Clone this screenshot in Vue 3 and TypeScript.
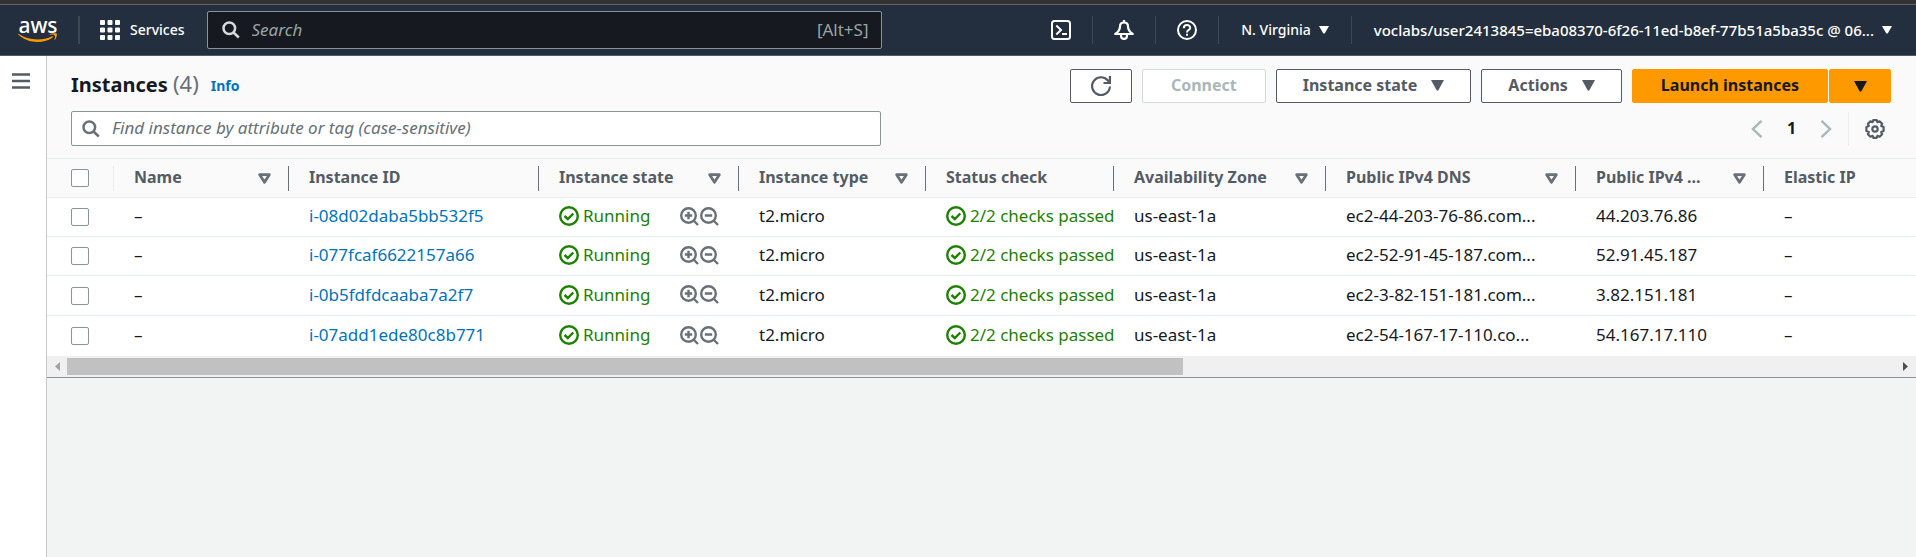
<script setup lang="ts">
import { ref } from 'vue'

interface Column {
  label: string
  width?: number
  sortable: boolean
}

interface Instance {
  id: string
  dns: string
  ip: string
  selected: boolean
}

const columns: Column[] = [
  { label: 'Name', width: 175, sortable: true },
  { label: 'Instance ID', width: 250, sortable: false },
  { label: 'Instance state', width: 200, sortable: true },
  { label: 'Instance type', width: 187, sortable: true },
  { label: 'Status check', width: 188, sortable: false },
  { label: 'Availability Zone', width: 212, sortable: true },
  { label: 'Public IPv4 DNS', width: 250, sortable: true },
  { label: 'Public IPv4 ...', width: 188, sortable: true },
  { label: 'Elastic IP', sortable: false },
]

const instances = ref<Instance[]>([
  { id: 'i-08d02daba5bb532f5', dns: 'ec2-44-203-76-86.com...', ip: '44.203.76.86', selected: false },
  { id: 'i-077fcaf6622157a66', dns: 'ec2-52-91-45-187.com...', ip: '52.91.45.187', selected: false },
  { id: 'i-0b5fdfdcaaba7a2f7', dns: 'ec2-3-82-151-181.com...', ip: '3.82.151.181', selected: false },
  { id: 'i-07add1ede80c8b771', dns: 'ec2-54-167-17-110.co...', ip: '54.167.17.110', selected: false },
])

const search = ref('')
const filter = ref('')
const allSelected = ref(false)

function toggleAll() {
  instances.value.forEach((row) => (row.selected = allSelected.value))
}
</script>

<template>
  <div class="console">
    <div class="browser-edge"></div>
    <header class="topnav">
      <a class="logo" href="#" aria-label="AWS home">
        <span class="logo-text">aws</span>
        <svg class="smile" viewBox="0 0 40 10" width="40" height="10">
          <path d="M.4.8C6 4.600 12 6.500 19.500 6.500c5.500 0 10-1.200 14.500-3.300.8-.3 1.400.5.700 1.100C30.800 7.600 25.300 9 19.500 9 12 9 5.500 6.300.2 1.500-.1 1 .1.600.4.8z" fill="#f90" />
          <path d="M36.200 2.100c-.7-.8-3-.6-4.400-.3-.4.100-.5-.3-.1-.6C33.400.1 38 0 38.700.5c.6.600-.1 4.800-1.900 6.500-.3.300-.6.100-.4-.2.500-1.200 1.200-3.800-.2-4.700z" fill="#f90" />
        </svg>
      </a>
      <span class="nav-line bold-line"></span>
      <button class="services" type="button">
        <svg viewBox="0 0 20 20" width="20" height="20" fill="#fff">
          <template v-for="r in 3" :key="r">
            <rect v-for="c in 3" :key="c" :x="(c - 1) * 7.500" :y="(r - 1) * 7.500" width="5" height="5" rx="1" />
          </template>
        </svg>
        Services
      </button>
      <label class="nav-search">
        <svg viewBox="0 0 18 18" width="18" height="18" fill="none" stroke="#d5dbdb" stroke-width="2.500">
          <circle cx="7.300" cy="7.300" r="5.800" /><path d="M11.500 11.500l5.300 5" />
        </svg>
        <input v-model="search" type="text" placeholder="Search" aria-label="Search" />
        <span>[Alt+S]</span>
      </label>
      <div class="nav-right">
        <button class="nav-icon" type="button" aria-label="CloudShell">
          <svg viewBox="0 0 20 20" width="20" height="20" fill="none" stroke="#fff" stroke-width="2">
            <rect x="1" y="1" width="18" height="18" rx="2.500" /><path d="M5.300 5.500l4.700 4.500-4.700 4.500M11 14h5" />
          </svg>
        </button>
        <span class="nav-line"></span>
        <button class="nav-icon" type="button" aria-label="Notifications">
          <svg viewBox="0 0 20 20" width="20" height="20" fill="none" stroke="#fff" stroke-width="2.200" stroke-linejoin="round">
            <path d="M10 0v3M10 2.500C7.500 2.500 6 4 6 6.500 6 10 4 12.200 1.200 14h17.600C16 12.200 14 10 14 6.500 14 4 12.500 2.500 10 2.500z" />
            <path d="M7 14v1.500c0 4.600 6 4.600 6 0V14" />
          </svg>
        </button>
        <span class="nav-line"></span>
        <button class="nav-icon" type="button" aria-label="Help">
          <svg viewBox="0 0 20 20" width="20" height="20" fill="none" stroke="#fff" stroke-width="2">
            <circle cx="10" cy="10" r="9" /><path d="M6.800 8.200C6.800 3.900 13.200 4 13.200 7.900 13.200 10.200 10 9.700 10 12.500M10 13.700v2.100" />
          </svg>
        </button>
        <span class="nav-line"></span>
        <button class="nav-menu" type="button">
          N. Virginia
          <svg viewBox="0 0 10 8" width="10" height="8"><path d="M0 0h10L6 7q-1 1.200-2 0z" fill="#fff" /></svg>
        </button>
        <span class="nav-line"></span>
        <button class="nav-menu account" type="button">
          voclabs/user2413845=eba08370-6f26-11ed-b8ef-77b51a5ba35c @ 06...
          <svg viewBox="0 0 10 8" width="10" height="8"><path d="M0 0h10L6 7q-1 1.200-2 0z" fill="#fff" /></svg>
        </button>
      </div>
    </header>

    <div class="body">
      <aside class="side">
        <button type="button" aria-label="Open navigation">
          <svg viewBox="0 0 18 16" width="18" height="16" stroke="#545b64" stroke-width="2.400"><path d="M0 1.500h18M0 8h18M0 14.500h18" /></svg>
        </button>
      </aside>

      <main class="content">
        <section class="panel">
          <div class="panel-head">
            <div class="title-row">
              <h1>Instances <span>(4)</span></h1>
              <a href="#" class="info">Info</a>
              <div class="actions">
                <button class="btn icon-btn" type="button" aria-label="Refresh">
                  <svg viewBox="0 0 20 20" width="20" height="20" fill="none" stroke="#545b64" stroke-width="2.200">
                    <path d="M18.900 10.500A8.900 8.900 0 1 1 16.600 4.200l1.700 2M18.900 0v7h-6.400" />
                  </svg>
                </button>
                <button class="btn text-btn" type="button" disabled>Connect</button>
                <button class="btn" type="button">
                  Instance state
                  <svg viewBox="0 0 13 11" width="13" height="11"><path d="M0 0h13L7.500 10q-1 1.300-2 0z" fill="#545b64" /></svg>
                </button>
                <button class="btn" type="button">
                  Actions
                  <svg viewBox="0 0 13 11" width="13" height="11"><path d="M0 0h13L7.500 10q-1 1.300-2 0z" fill="#545b64" /></svg>
                </button>
                <div class="split">
                  <button class="btn text-btn primary" type="button">Launch instances</button>
                  <button class="btn primary icon-btn" type="button" aria-label="More launch options">
                    <svg viewBox="0 0 13 11" width="13" height="11"><path d="M0 0h13L7.500 10q-1 1.300-2 0z" fill="#16191f" /></svg>
                  </button>
                </div>
              </div>
            </div>
            <div class="filter-row">
              <label class="filter">
                <svg viewBox="0 0 18 18" width="18" height="18" fill="none" stroke="#687078" stroke-width="2.500">
                  <circle cx="7.300" cy="7.300" r="5.800" /><path d="M11.500 11.500l5.300 5" />
                </svg>
                <input v-model="filter" type="text" placeholder="Find instance by attribute or tag (case-sensitive)" aria-label="Find instance" />
              </label>
              <nav class="pager" aria-label="Pages">
                <button type="button" aria-label="Previous page">
                  <svg viewBox="0 0 12 18" width="12" height="18" fill="none" stroke="#aab7b8" stroke-width="2.400"><path d="M10.500.8L2 9l8.500 8.200" /></svg>
                </button>
                <button class="page" type="button">1</button>
                <button type="button" aria-label="Next page">
                  <svg viewBox="0 0 12 18" width="12" height="18" fill="none" stroke="#aab7b8" stroke-width="2.400"><path d="M1.500.8L10 9l-8.500 8.200" /></svg>
                </button>
                <span class="pager-line"></span>
                <button type="button" aria-label="Preferences">
                  <svg viewBox="0 0 20 20" width="20" height="20" fill="none" stroke="#545b64" stroke-width="2.200" stroke-linejoin="round">
                    <path d="M8.200 1.200h3.600l.6 2 2.200-.9 2.500 2.500-.9 2.200 2.400 1v4l-2.400 1 .9 2.200-2.500 2.500-2.200-.9-.6 2H8.200l-.6-2-2.200.9-2.500-2.500.9-2.200-2.400-1V8l2.400-1-.9-2.200 2.500-2.500 2.200.9z" />
                    <circle cx="10" cy="10" r="2.700" />
                  </svg>
                </button>
              </nav>
            </div>
          </div>

          <div class="table-wrap">
            <table>
              <colgroup>
                <col class="col-check" />
                <col v-for="c in columns" :key="c.label" :style="c.width ? { width: c.width + 'px' } : {}" />
              </colgroup>
              <thead>
                <tr>
                  <th class="check"><input v-model="allSelected" type="checkbox" aria-label="Select all" @change="toggleAll" /></th>
                  <th v-for="c in columns" :key="c.label" scope="col">
                    <div class="th-inner">
                      <span>{{ c.label }}</span>
                      <svg v-if="c.sortable" viewBox="0 0 13 11" width="13" height="11" fill="none" stroke="#687078" stroke-width="2.800" stroke-linejoin="round">
                        <path d="M1.700 1.700h9.600L6.500 9.200z" />
                      </svg>
                    </div>
                  </th>
                </tr>
              </thead>
              <tbody>
                <tr v-for="row in instances" :key="row.id">
                  <td class="check"><input v-model="row.selected" type="checkbox" :aria-label="'Select ' + row.id" /></td>
                  <td>–</td>
                  <td><a href="#">{{ row.id }}</a></td>
                  <td>
                    <div class="state">
                      <span class="ok">
                        <svg viewBox="0 0 20 20" width="20" height="20" fill="none" stroke="#1d8102" stroke-width="2.400">
                          <circle cx="10" cy="10" r="8.800" /><path d="M5.500 10l3.300 3 5.500-5.500" />
                        </svg>
                        Running
                      </span>
                      <span class="lenses">
                        <button type="button" aria-label="Include filter">
                          <svg viewBox="0 0 19 19" width="19" height="19" fill="none" stroke="#687078" stroke-width="2.400">
                            <circle cx="8.500" cy="8.500" r="7.300" /><path d="M13.500 13.500l4.500 4.500M4.800 8.500h7.400M8.500 4.800v7.400" />
                          </svg>
                        </button>
                        <button type="button" aria-label="Exclude filter">
                          <svg viewBox="0 0 19 19" width="19" height="19" fill="none" stroke="#687078" stroke-width="2.400">
                            <circle cx="8.500" cy="8.500" r="7.300" /><path d="M13.500 13.500l4.500 4.500M4.800 8.500h7.400" />
                          </svg>
                        </button>
                      </span>
                    </div>
                  </td>
                  <td>t2.micro</td>
                  <td>
                    <span class="ok">
                      <svg viewBox="0 0 20 20" width="20" height="20" fill="none" stroke="#1d8102" stroke-width="2.400">
                        <circle cx="10" cy="10" r="8.800" /><path d="M5.500 10l3.300 3 5.500-5.500" />
                      </svg>
                      2/2 checks passed
                    </span>
                  </td>
                  <td>us-east-1a</td>
                  <td>{{ row.dns }}</td>
                  <td>{{ row.ip }}</td>
                  <td>–</td>
                </tr>
              </tbody>
            </table>
          </div>

          <div class="scrollbar">
            <svg viewBox="0 0 5 9" width="5" height="9"><path d="M5 0v9L0 4.500z" fill="#a3a3a3" /></svg>
            <div class="track"><div class="thumb"></div></div>
            <svg viewBox="0 0 5 9" width="5" height="9"><path d="M0 0v9l5-4.500z" fill="#505050" /></svg>
          </div>
        </section>
      </main>
    </div>
  </div>
</template>

<style>
body {
  background: #f2f3f3;
}
</style>

<style scoped>
.console {
  min-height: 100vh;
  display: flex;
  flex-direction: column;
  font-family: "Noto Sans", "Open Sans", sans-serif;
  font-size: 16px;
  line-height: 24px;
  color: #16191f;
}
.console *,
.console {
  box-sizing: border-box;
}
button,
input {
  font: inherit;
  color: inherit;
}
button {
  background: none;
  border: 0;
  padding: 0;
  display: flex;
  align-items: center;
  justify-content: center;
  white-space: nowrap;
}
svg {
  display: block;
  flex: none;
}
a {
  color: #0073bb;
  text-decoration: none;
}
.browser-edge {
  height: 5px;
  background: #333;
  border-bottom: 1px solid #666;
}
.topnav {
  height: 51px;
  display: flex;
  align-items: center;
  padding: 0 24px 0 18px;
  background: #232f3e;
  border-bottom: 1px solid #545b64;
  color: #fff;
  font-size: 14px;
  font-weight: 500;
}
.logo {
  width: 40px;
  color: #fff;
}
.logo-text {
  display: block;
  font-size: 21px;
  line-height: 16px;
  text-align: center;
}
.nav-line {
  width: 1px;
  height: 28px;
  background: #414750;
}
.bold-line {
  width: 2px;
  margin: 0 20px;
}
.services {
  gap: 10px;
}
.nav-search {
  flex: 0 1 675px;
  height: 38px;
  margin-left: 22px;
  padding: 0 12px 0 14px;
  display: flex;
  align-items: center;
  gap: 12px;
  background: #16191f;
  border: 1px solid #879596;
  border-radius: 2px;
  color: #95a5a6;
  font-size: 17px;
  font-weight: 400;
}
.nav-search input,
.filter input {
  flex: 1;
  min-width: 0;
  padding: 0;
  border: 0;
  outline: 0;
  background: none;
}
.nav-search input::placeholder {
  color: #95a5a6;
  font-style: italic;
}
.nav-right {
  margin-left: auto;
  display: flex;
  align-items: center;
}
.nav-icon {
  width: 62px;
}
.nav-menu {
  padding: 0 22px;
  gap: 8px;
}
.account {
  padding-right: 0;
  font-size: 15px;
}
.body {
  flex: 1;
  display: flex;
}
.side {
  width: 47px;
  flex: none;
  padding: 17px 0 0 12px;
  background: #fff;
  border-right: 1px solid #c4cccc;
}
.content {
  flex: 1;
  min-width: 0;
}
.panel {
  background: #fff;
  border-bottom: 1px solid #879596;
}
.panel-head {
  padding: 13px 25px 12px 24px;
  background: #fafafa;
  border-bottom: 1px solid #eaeded;
}
.title-row {
  display: flex;
  align-items: center;
  height: 34px;
}
h1 {
  margin: 0;
  font-size: 20px;
  line-height: 30px;
  font-weight: 700;
  padding-bottom: 4px;
}
h1 span {
  font-size: 22px;
  font-weight: 400;
  color: #687078;
}
.info {
  margin-left: 12px;
  font-size: 14px;
  font-weight: 700;
}
.actions {
  margin-left: auto;
  display: flex;
  gap: 10px;
}
.btn {
  height: 34px;
  padding: 0 26px 2px;
  gap: 14px;
  background: #fff;
  border: 1px solid #545b64;
  border-radius: 2px;
  color: #545b64;
  font-weight: 700;
}
.btn:disabled {
  color: #aab7b8;
  border-color: #d5dbdb;
}
.text-btn {
  padding: 0 28px 2px;
}
.icon-btn {
  width: 62px;
  padding: 0;
}
.split {
  display: flex;
  gap: 1px;
}
.primary {
  background: #f90;
  border-color: #f90;
  color: #16191f;
}
.filter-row {
  margin-top: 8px;
  display: flex;
  justify-content: space-between;
}
.filter {
  flex: 0 1 810px;
  height: 35px;
  padding: 0 10px;
  display: flex;
  align-items: center;
  gap: 12px;
  background: #fff;
  border: 1px solid #879596;
  border-radius: 2px;
}
.filter input {
  padding-bottom: 2px;
  font-size: 17px;
}
.filter input::placeholder {
  color: #687078;
  font-style: italic;
}
.pager {
  display: flex;
  align-items: center;
  padding-right: 6px;
}
.page {
  width: 57px;
  padding-bottom: 2px;
  font-weight: 700;
}
.pager-line {
  width: 1px;
  height: 34px;
  margin: 0 16px;
  background: #eaeded;
}
.table-wrap {
  overflow: hidden;
}
table {
  width: 100%;
  table-layout: fixed;
  border-collapse: separate;
  border-spacing: 0;
}
.col-check {
  width: 67px;
}
th,
td {
  height: 39px;
  padding: 0 0 0 20px;
  text-align: left;
  white-space: nowrap;
  overflow: hidden;
  border-bottom: 1px solid #eaeded;
}
td {
  padding-bottom: 2px;
  font-size: 17px;
}
th {
  background: #fafafa;
  color: #545b64;
  font-weight: 700;
}
tbody tr:nth-child(n + 3) td {
  height: 40px;
}
tbody tr:last-child td {
  border-bottom: 0;
}
th.check,
td.check {
  padding: 0 0 0 24px;
}
th.check {
  background: linear-gradient(#eaeded, #eaeded) right center / 1px 25px no-repeat #fafafa;
}
.check input {
  appearance: none;
  display: block;
  width: 18px;
  height: 18px;
  margin: 0;
  background: #fff;
  border: 1px solid #879596;
  border-radius: 2px;
}
.check input:checked {
  background: #0073bb;
}
.th-inner {
  height: 25px;
  padding-right: 17px;
  display: flex;
  align-items: center;
  justify-content: space-between;
  border-right: 1px solid #687078;
}
.th-inner span {
  padding-bottom: 2px;
}
th:last-child .th-inner {
  border-right: 0;
}
.state {
  display: flex;
  justify-content: space-between;
  padding-right: 20px;
}
.ok {
  display: flex;
  align-items: center;
  gap: 4px;
  color: #1d8102;
}
.lenses {
  display: flex;
  gap: 1px;
}
.scrollbar {
  height: 21px;
  padding: 0 8px;
  display: flex;
  align-items: center;
  gap: 7px;
  background: #f0f0f0;
}
.track {
  flex: 1;
}
.thumb {
  width: 61%;
  height: 17px;
  background: #c1c1c1;
}
</style>
